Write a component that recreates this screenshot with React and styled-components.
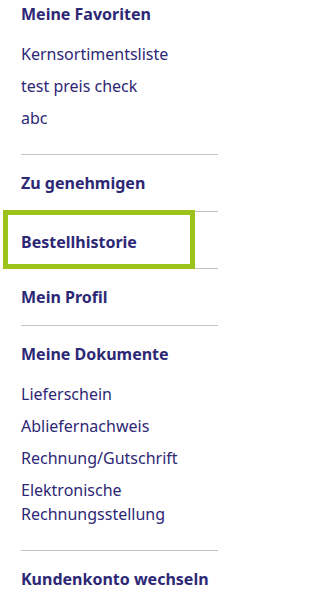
import React from 'react';
import styled, { createGlobalStyle } from 'styled-components';

const GlobalStyle = createGlobalStyle`
  body {
    margin: 0;
    background: #ffffff;
    font-family: 'Noto Sans', 'Open Sans', Arial, sans-serif;
  }
`;

const Nav = styled.nav`
  width: 197px;
  padding: 2px 13px 0 21px;
  color: #2d2875;
`;

const Section = styled.div`
  padding: ${p => (p.first ? '0 0 20px' : '16px 0')};
  border-top: ${p => (p.first ? 'none' : '1px solid #c3c3c3')};
  ${p => p.withList && !p.first && 'padding-bottom: 20px;'}
`;

const Heading = styled.a`
  display: block;
  font-size: 16px;
  font-weight: 700;
  line-height: 24px;
  color: inherit;
  text-decoration: none;
`;

const FocusedHeading = styled(Heading)`
  width: 169px;
  margin: -13px 0 -12px -13px;
  padding: 15px 0 10px 13px;
  outline: 5px solid #9bc31c;
`;

const List = styled.ul`
  list-style: none;
  margin: 12px 0 0;
  padding: 0;
`;

const Item = styled.li`
  padding: 4px 0;
  font-size: 16px;
  line-height: 24px;
`;

const sections = [
  { title: 'Meine Favoriten', items: ['Kernsortimentsliste', 'test preis check', 'abc'] },
  { title: 'Zu genehmigen' },
  { title: 'Bestellhistorie', focused: true },
  { title: 'Mein Profil' },
  {
    title: 'Meine Dokumente',
    items: ['Lieferschein', 'Abliefernachweis', 'Rechnung/Gutschrift', 'Elektronische Rechnungsstellung'],
  },
  { title: 'Kundenkonto wechseln' },
];

const App = () => (
  <>
    <GlobalStyle />
    <Nav>
      {sections.map((s, i) => (
        <Section key={s.title} first={i === 0} withList={!!s.items}>
          {s.focused ? (
            <FocusedHeading href="#">{s.title}</FocusedHeading>
          ) : (
            <Heading href="#">{s.title}</Heading>
          )}
          {s.items && (
            <List>
              {s.items.map(item => (
                <Item key={item}>{item}</Item>
              ))}
            </List>
          )}
        </Section>
      ))}
    </Nav>
  </>
);

export default App;
